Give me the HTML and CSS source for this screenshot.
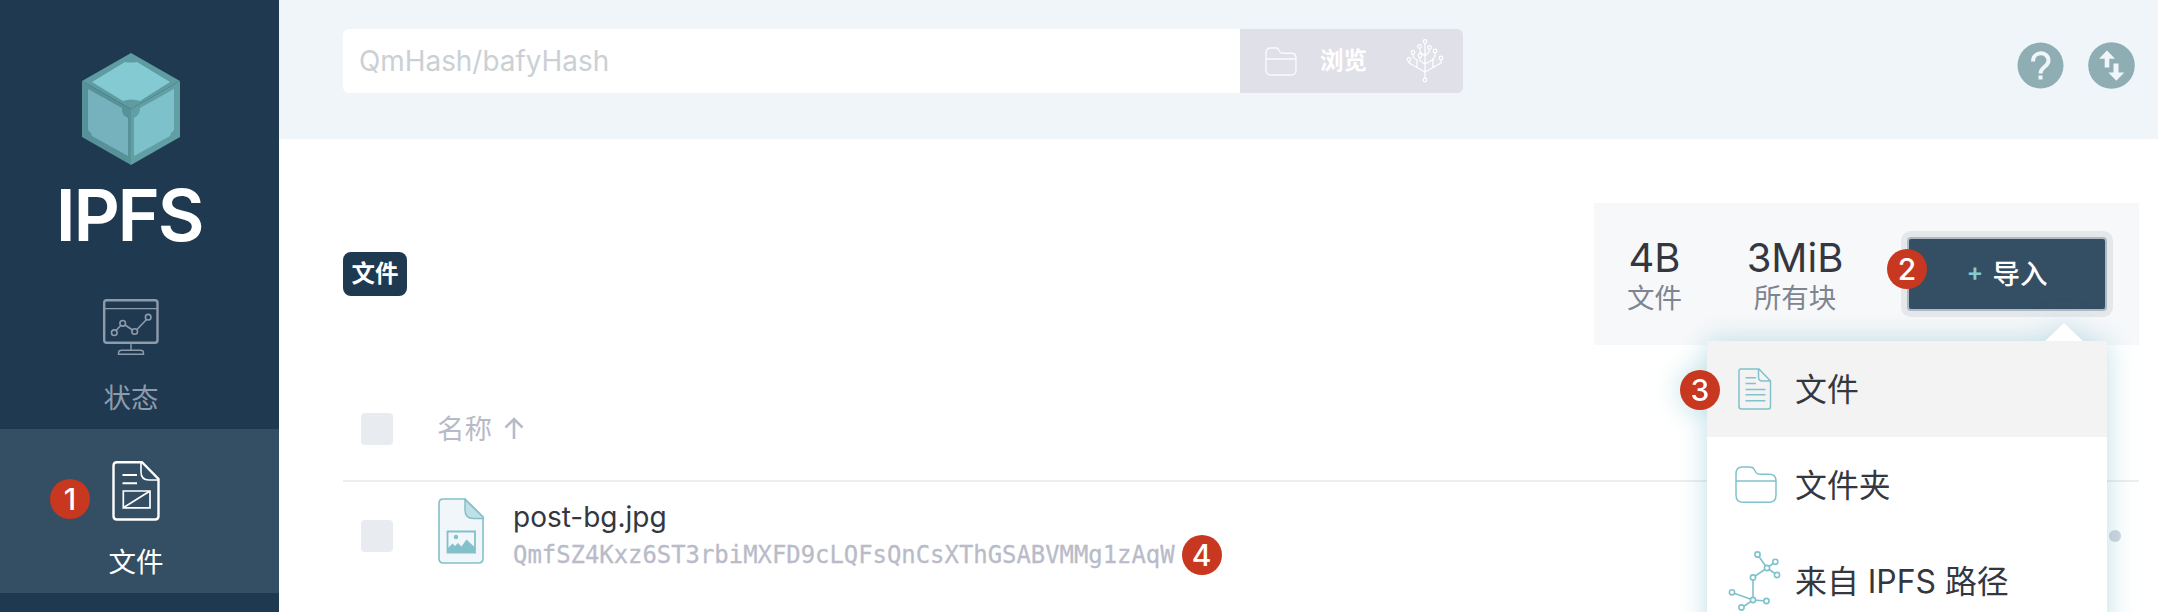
FILE: index.html
```html
<!DOCTYPE html>
<html lang="zh-CN">
<head>
<meta charset="utf-8">
<title>IPFS</title>
<link rel="stylesheet" href="styles.css">
</head>
<body>
<div class="app">
  <nav class="sidebar">
    <div class="brand">
      <svg class="cube" width="98" height="112" viewBox="0 0 98 112">
        <path d="M49 0 98 28 49 56 0 28z" fill="#5f9ca2"/>
        <path d="M0 28 49 56V112L0 84z" fill="#579298"/>
        <path d="M98 28 49 56V112L98 84z" fill="#619fa4"/>
        <path d="M43 9Q49 10 55 9L88 29 58 48Q49 45 41 48L10 29z" fill="#83cad2"/>
        <path d="M6 36 40 55Q39 62 46 65V103L10 83Q9 79 6 77z" fill="#76b1be"/>
        <path d="M92 36 58 55Q58 62 52 65V103L88 83Q89 79 92 77z" fill="#7dc1ca"/>
      </svg>
      <div class="brand-name">IPFS</div>
    </div>
    <a class="nav-item nav-status">
      <svg width="56" height="56" viewBox="0 0 56 56" fill="none" stroke="#8e9bab">
        <rect x="1.2" y="1.2" width="53.3" height="42.6" rx="2.5" stroke-width="2.4"/>
        <path d="M1 9.6H55M28 44V51.5" stroke-width="1.4"/>
        <path d="M15.5 55.3V54q0-2.7 3-2.7h19q3 0 3 2.7v1.3z" stroke-width="1.4"/>
        <path d="M13 31.5 17.7 26.500M22 26 29.500 31M34 30.500 43.500 20.500" stroke-width="1.6"/>
        <circle cx="11.300" cy="33.700" r="2.800" stroke-width="1.6"/><circle cx="19.700" cy="24.300" r="2.800" stroke-width="1.6"/><circle cx="31.700" cy="32.500" r="2.800" stroke-width="1.6"/><circle cx="45.200" cy="18.200" r="2.800" stroke-width="1.6"/>
      </svg>
      <span>状态</span>
    </a>
    <a class="nav-item nav-files">
      <svg width="48" height="60" viewBox="0 0 48 60" fill="none" stroke="#fff">
        <path d="M5 1.200H30L46.500 18V55q0 3.500-3.500 3.500H5q-3.500 0-3.500-3.500V4.700q0-3.500 3.500-3.500z" stroke-width="2.400"/>
        <path d="M29 2V11q0 8 8 8H46" stroke-width="1.600"/>
        <path d="M10.500 14H25M10.500 22.200H25" stroke-width="2"/>
        <path d="M11.300 30H38V46.800H11.300zL11.300 46.800 38 30" stroke-width="1.700" fill="none"/>
      </svg>
      <span>文件</span>
      <b class="step step-1">1</b>
    </a>
  </nav>
  <div class="page">
    <header class="topbar">
      <div class="search">
        <div class="field">QmHash/bafyHash</div>
        <div class="browse">
          <svg width="32" height="29" viewBox="0 0 32 29" fill="none" stroke="#fff" stroke-width="1.400"><path d="M6 1H11Q13 1 14 3L15 5Q15.700 6.300 17.500 6.300H26Q31 6.300 31 11V23Q31 28 26 28H6Q1 28 1 23V6Q1 1 6 1zM1 12H31" opacity=".85"/></svg>
          <span>浏览</span>
          <svg width="38" height="44" viewBox="0 0 38 44" fill="none" stroke="#fff" stroke-width="1.200"><path d="M19 4V39M19 33 3 24V22M19 33 35 24V20M11 28V21L7 18V15M27 28V20L29 17V14M19 25 14 22V18M19 25 28 20M19 17 14 13V10M19 17 23 13V10"/><g fill="#dfe0e8"><circle cx="19" cy="2.500" r="1.800"/><circle cx="19" cy="41" r="1.800"/><circle cx="3" cy="20.500" r="1.800"/><circle cx="35" cy="19" r="1.800"/><circle cx="7" cy="13.500" r="1.800"/><circle cx="29" cy="12" r="1.800"/><circle cx="14" cy="16.500" r="1.800"/><circle cx="13.500" cy="7.500" r="1.800"/><circle cx="23.500" cy="8.500" r="1.800"/></g></svg>
        </div>
      </div>
      <div class="tools">
        <svg width="47" height="47" viewBox="0 0 47 47"><circle cx="23.500" cy="23.500" r="23" fill="#8faeb3"/><path d="M16 19.500C16 8.500 31.500 9 31.500 18.500C31.500 25 23.500 24.500 23.500 31.500" fill="none" stroke="#f0f5fa" stroke-width="4"/><path d="M21.500 33.500h4v4h-4z" fill="#f0f5fa"/></svg>
        <svg width="47" height="47" viewBox="0 0 47 47"><circle cx="23.500" cy="23.500" r="23.300" fill="#8faeb3"/><path d="M19 8.500 27 16.700H21.300V25.500H16.700V16.700H11zM25.500 21.500H30.500V30.500H36.300L28.300 38.700 20.300 30.500H25.500z" fill="#f0f5fa"/></svg>
      </div>
    </header>
    <main class="content">
      <div class="files-head">
        <span class="crumb">文件</span>
        <div class="summary">
          <div class="stat stat-size"><strong>4B</strong><span>文件</span></div>
          <div class="stat stat-blocks"><strong>3MiB</strong><span>所有块</span></div>
          <div class="import-wrap">
            <div class="import"><i>+</i><span>导入</span></div>
            <b class="step step-2">2</b>
            <div class="menu">
              <div class="menu-item active">
                <svg width="60" height="60" viewBox="0 0 60 60" fill="none" stroke="#81c2cc" stroke-width="1.500"><path d="M17 10H36L47.500 22V47.500q0 2.500-2.500 2.500H18.500q-2.500 0-2.500-2.500V12q0-2 2-2zM35.500 10.500V18q0 4 4 4H47M22.500 18.700H33M22.500 24.500H33M22.500 30.500H42.500M22.500 35.700H42.500M22.500 41.700H42.500"/></svg>
                <span>文件</span>
                <b class="step step-3">3</b>
              </div>
              <div class="menu-item">
                <svg width="60" height="60" viewBox="0 0 60 60" fill="none" stroke="#81c2cc" stroke-width="1.500"><path d="M19 12H26Q30 12 31 14L33 17.500Q34 19.300 37 19.300H46Q53 19.300 53 26V40Q53 47.300 46 47.300H20Q13 47.300 13 40V19Q13 12 19 12zM13 26H53"/></svg>
                <span>文件夹</span>
              </div>
              <div class="menu-item">
                <svg width="60" height="60" viewBox="0 0 60 60" fill="none" stroke="#81c2cc" stroke-width="1.600"><path d="M34.500 3.500 44 17M44 17 52 11M44 17 54 24M44 17 30 26.500V49M30 49 9 41.500M30 49 19 56.500M30 49 43.500 50"/><g fill="#fff"><circle cx="34.500" cy="3.500" r="2.600"/><circle cx="44" cy="17" r="2.600"/><circle cx="52.300" cy="10.800" r="2.600"/><circle cx="54" cy="24" r="2.600"/><circle cx="30" cy="26.500" r="2.600"/><circle cx="30" cy="49" r="2.600"/><circle cx="9" cy="41.300" r="2.600"/><circle cx="18.500" cy="56.500" r="2.600"/><circle cx="43.500" cy="50" r="2.600"/></g></svg>
                <span>来自 IPFS 路径</span>
              </div>
            </div>
          </div>
        </div>
      </div>
      <div class="list-head">
        <span class="check"></span>
        <span class="column">名称</span>
        <svg class="sort" width="20" height="22" viewBox="0 0 20 22" fill="none" stroke="#b7bbc8" stroke-width="2.600"><path d="M10 22V2M1.500 10.500 10 2 18.500 10.500"/></svg>
      </div>
      <div class="row">
        <span class="check"></span>
        <svg class="type-icon" width="46" height="66" viewBox="0 0 46 66"><path d="M5 1H27L45 19V60.500q0 4.500-4.500 4.500H5.500Q1 65 1 60.500V5.500Q1 1 5 1z" fill="#f0f6fa" stroke="#83c0ca" stroke-width="1.600"/><path d="M27 1.500V12q0 8.500 8.500 8.500H45V19z" fill="#bfe1e6" stroke="#83c0ca" stroke-width="1.500"/><path d="M9.500 33.500H37V54.500H9.500z" fill="#f0f6fa" stroke="#83c0ca" stroke-width="1.800"/><circle cx="18" cy="39" r="2.200" fill="#83c0ca"/><path d="M10 50 14.500 45.500 17 48 20 45 23.500 48.500 28.500 41.500 37 49.500V54.500H10z" fill="#83c0ca"/></svg>
        <div class="file">
          <div class="file-name">post-bg.jpg</div>
          <div class="hash-line"><span>QmfSZ4Kxz6ST3rbiMXFD9cLQFsQnCsXThGSABVMMg1zAqW</span><b class="step step-4">4</b></div>
        </div>
        <span class="more"></span>
      </div>
    </main>
  </div>
</div>
</body>
</html>
```
FILE: styles.css
```css
* { box-sizing: border-box; }
body { margin: 0; background: #fff; font-family: Inter, "Noto Sans CJK SC", sans-serif; color: #34373f; }
svg { display: block; flex: none; }
.app { display: flex; width: 2158px; height: 612px; overflow: hidden; }
.sidebar { width: 279px; flex: none; background: #1e3950; }
.brand { height: 270px; padding-top: 53px; display: flex; flex-direction: column; align-items: center; padding-right: 17px; }
.brand-name { margin: 14px 4px 0 0; font-size: 72px; line-height: 71px; font-weight: 600; letter-spacing: -2.300px; color: #fff; }
.nav-item { display: flex; flex-direction: column; align-items: center; font-size: 27.500px; line-height: 40px; }
.nav-status { height: 159px; padding: 29px 17px 0 0; color: #8e9bab; }
.nav-status span { margin-top: 23px; }
.nav-files { position: relative; height: 164px; padding: 32px 7px 0 0; color: #fff; background: #344e63; }
.nav-files span { margin-top: 21px; }
.step { display: flex; align-items: center; justify-content: center; width: 40px; height: 40px; border-radius: 50%; background: #c8371f; color: #fff; font-size: 30px; line-height: 40px; font-weight: 500; }
.step-1 { position: absolute; left: 50px; top: 50px; }
.page { flex: 1; min-width: 0; }
.topbar { height: 139px; background: #f0f5fa; padding: 29px 23px 0 64px; display: flex; justify-content: space-between; }
.search { display: flex; height: 64px; width: 1120px; border-radius: 6px; overflow: hidden; }
.field { width: 897px; padding-left: 16px; background: #fff; color: #cbd0d5; font-size: 27.900px; line-height: 64px; }
.browse { flex: 1; display: flex; align-items: center; padding-left: 25px; background: #dfe0e8; color: #fff; font-size: 23.500px; font-weight: 700; }
.browse span { margin: -4px 39px 0 23px; }
.tools { display: flex; gap: 24px; padding-top: 13px; }
.content { padding: 64px 19px 0 64px; }
.files-head { display: flex; justify-content: space-between; align-items: flex-start; }
.crumb { margin-top: 49px; width: 64px; height: 44px; border-radius: 8px; background: #1e3950; color: #fff; font-size: 23.500px; font-weight: 700; line-height: 43px; text-align: center; }
.summary { width: 545px; height: 142px; background: #f7f8fa; display: flex; }
.stat { display: flex; flex-direction: column; align-items: center; padding-top: 35px; }
.stat strong { font-size: 40px; line-height: 40px; font-weight: 400; }
.stat span { font-size: 27.500px; line-height: 40px; color: #7f8491; }
.stat-size { width: 121px; }
.stat-blocks { width: 160px; }
.import-wrap { position: relative; width: 200px; height: 74px; margin: 34px 0 0 32px; }
.import { height: 74px; display: flex; align-items: center; justify-content: center; gap: 9px; border: 2px solid #aeb9c4; border-radius: 4px; background: #344e63; box-shadow: 0 0 0 6px #e5e8eb; color: #fff; font-size: 27.500px; font-weight: 500; padding-bottom: 4px; }
.import i { font-style: normal; font-size: 25px; font-weight: 600; color: #83cad2; }
.step-2 { position: absolute; left: -20px; top: 12px; }
.menu { position: absolute; z-index: 2; left: -200px; top: 104px; width: 400px; height: 390px; background: #fff; filter: drop-shadow(0 0 14px rgba(92, 176, 192, .4)); }
.menu::before { content: ""; position: absolute; right: 23px; top: -19px; width: 40px; height: 20px; background: #fff; clip-path: polygon(50% 5%, 100% 100%, 0 100%); }
.menu-item { position: relative; height: 96px; display: flex; align-items: center; padding-left: 16px; font-size: 31.900px; }
.menu-item span { margin: -5px 0 0 12px; white-space: nowrap; }
.menu-item.active { background: #f3f3f3; }
.step-3 { position: absolute; left: -27px; top: 29px; }
.list-head { height: 137px; border-bottom: 2px solid #eceef0; padding: 32px 0 0 18px; display: flex; align-items: center; }
.check { flex: none; width: 32px; height: 32px; border-radius: 4px; background: #e8ebf0; }
.column { margin: 1px 0 0 44px; font-size: 27.500px; line-height: 40px; color: #b7bbc8; }
.sort { margin: -2px 0 0 12px; }
.row { display: flex; height: 108px; align-items: center; padding-left: 18px; }
.type-icon { margin: -10px 0 0 45px; }
.file { flex: 1; margin: 2px 0 0 29px; }
.file-name { font-size: 28px; line-height: 36px; }
.hash-line { display: flex; align-items: center; height: 40px; color: #b9bbc9; font: 23.900px/40px "DejaVu Sans Mono", monospace; -webkit-text-stroke: .3px #b9bbc9; }
.step-4 { margin-left: 7px; font-family: Inter, sans-serif; -webkit-text-stroke: 0; }
.more { width: 12px; height: 12px; border-radius: 50%; background: #d0d5dd; margin-right: 18px; }
```
